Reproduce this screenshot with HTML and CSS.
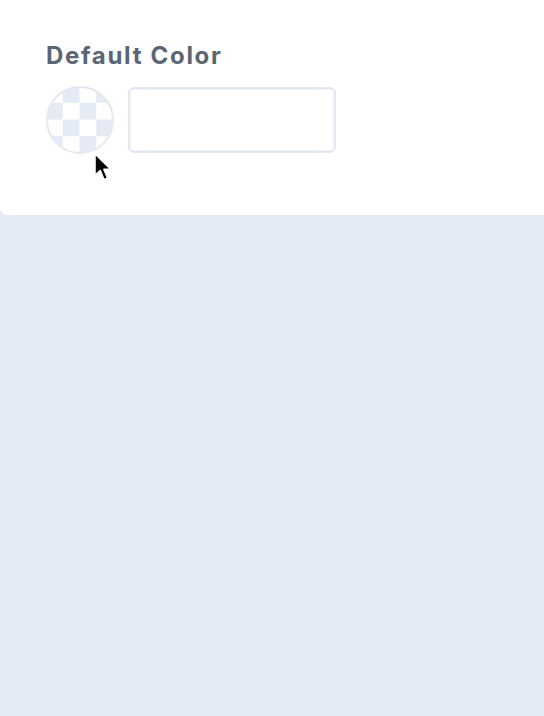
FILE: index.html
```html
<!DOCTYPE html>
<html>
<head>
<meta charset="utf-8">
<link rel="stylesheet" href="styles.css">
</head>
<body>
<div class="card">
  <h2 class="title">Default Color</h2>
  <div class="row">
    <div class="swatch"></div>
    <div class="field"></div>
    <svg class="cursor" width="22" height="32" viewBox="0 0 20 30">
      <path d="M1.5 1.5 L1.5 22 L6.5 17.5 L10 26 L13.5 24.5 L10 16.3 L16.5 16.3 Z" fill="#000" stroke="#fff" stroke-width="1.6" stroke-linejoin="round"/>
    </svg>
  </div>
</div>
</body>
</html>
```
FILE: styles.css
```css
html, body {
  margin: 0;
  padding: 0;
}
body {
  background: #e4ebf5;
  width: 544px;
  height: 716px;
  overflow: hidden;
  font-family: Inter, "Liberation Sans", Arial, sans-serif;
}
.card {
  background: #ffffff;
  height: 215px;
  box-sizing: border-box;
  padding: 42px 46px 0 46px;
  border-radius: 0 0 0 8px;
}
.title {
  margin: 0;
  font-family: Inter, "Liberation Sans", sans-serif;
  font-size: 24px;
  line-height: 28px;
  font-weight: 700;
  color: #5b6574;
  letter-spacing: 1.7px;
}
.row {
  position: relative;
  display: flex;
  align-items: flex-start;
  gap: 14px;
  margin-top: 16px;
}
.swatch {
  width: 68px;
  height: 68px;
  box-sizing: border-box;
  border-radius: 50%;
  border: 2px solid #e3e9f2;
  background-color: #fff;
  background-image: repeating-conic-gradient(#e4ebf5 0 25%, #ffffff 0 50%);
  background-size: 33.5px 33.5px;
  background-origin: border-box;
  background-position: 0 0;
}
.field {
  width: 208px;
  height: 66px;
  margin-top: 1px;
  box-sizing: border-box;
  border: 2px solid #e3e9f2;
  border-radius: 6px;
  box-shadow: inset 0 0 0 1px #f0f4f9;
  background: #fff;
}
.cursor {
  position: absolute;
  left: 47px;
  top: 66px;
}
```
